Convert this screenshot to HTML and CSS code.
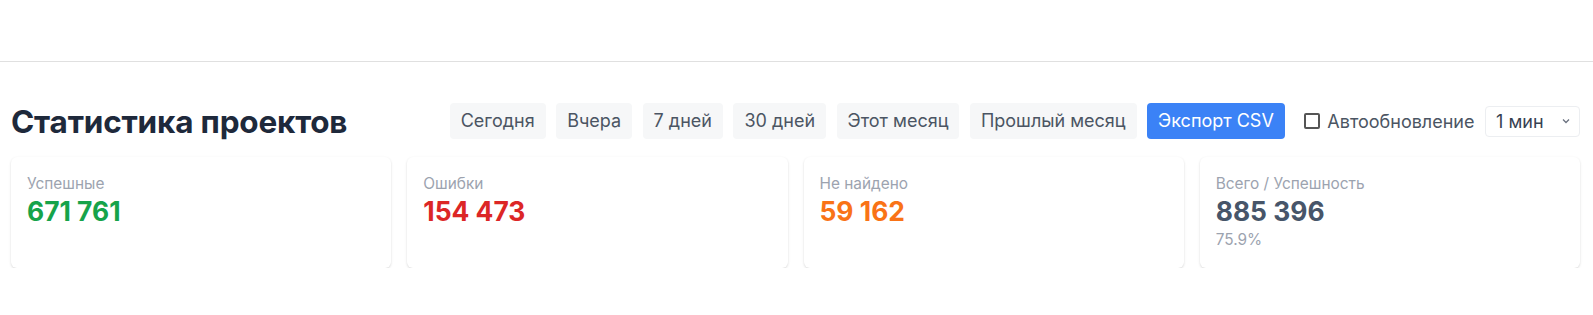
FILE: index.html
```html
<!DOCTYPE html>
<html lang="ru">
<head>
<meta charset="utf-8">
<title>Статистика проектов</title>
<link rel="stylesheet" href="styles.css">
</head>
<body>
<nav class="topbar"></nav>
<main class="page">
  <div class="header">
    <h1 class="title">Статистика проектов</h1>
    <div class="controls">
      <button class="btn">Сегодня</button>
      <button class="btn">Вчера</button>
      <button class="btn">7 дней</button>
      <button class="btn">30 дней</button>
      <button class="btn">Этот месяц</button>
      <button class="btn">Прошлый месяц</button>
      <button class="btn btn-primary">Экспорт CSV</button>
      <label class="auto"><span class="box"></span>Автообновление</label>
      <div class="select">1 мин
        <svg class="chev" width="10" height="10" viewBox="0 0 10 10"><path d="M2 3.5 L5 6.5 L8 3.5" fill="none" stroke="#6b7280" stroke-width="1.3"/></svg>
      </div>
    </div>
  </div>
  <div class="cards">
    <div class="card">
      <div class="label">Успешные</div>
      <div class="value green">671 761</div>
    </div>
    <div class="card">
      <div class="label">Ошибки</div>
      <div class="value red">154 473</div>
    </div>
    <div class="card">
      <div class="label">Не найдено</div>
      <div class="value orange">59 162</div>
    </div>
    <div class="card">
      <div class="label">Всего / Успешность</div>
      <div class="value slate">885 396</div>
      <div class="sub">75.9%</div>
    </div>
  </div>
</main>
</body>
</html>
```
FILE: styles.css
```css
* { box-sizing: border-box; }
body {
  margin: 0;
  background: #fff;
  font-family: Inter, "Noto Sans", sans-serif;
  color: #1f2937;
}
.topbar {
  height: 62px;
  border-bottom: 1px solid #e0e0e0;
}
.page {
  padding: 41px 13px 0 11px;
}
.header {
  display: flex;
  justify-content: space-between;
  align-items: center;
  height: 36px;
}
.title {
  margin: 0;
  font-size: 31.5px;
  font-weight: 700;
  color: #1e293b;
  letter-spacing: -0.2px;
}
.controls {
  display: flex;
  align-items: center;
  gap: 10.5px;
}
.btn {
  font-family: inherit;
  font-size: 18px;
  line-height: 36px;
  height: 36px;
  padding: 0 11px;
  border: none;
  border-radius: 4px;
  background: #f6f7f8;
  color: #4b5563;
}
.btn-primary {
  background: #3b82f6;
  color: #fff;
}
.auto {
  display: flex;
  align-items: center;
  gap: 7px;
  margin-left: 9px;
  font-size: 18px;
  color: #4b5563;
}
.box {
  width: 16px;
  height: 16px;
  border: 2px solid #555;
  border-radius: 2px;
}
.select {
  display: flex;
  align-items: center;
  justify-content: space-between;
  width: 95px;
  height: 31px;
  padding: 0 8px 0 10px;
  border: 1px solid #eceef1;
  border-radius: 4px;
  font-size: 18px;
  color: #374151;
}
.cards {
  display: grid;
  grid-template-columns: repeat(4, 1fr);
  gap: 16px;
  margin-top: 18px;
}
.card {
  height: 111px;
  background: #fff;
  border-radius: 6px;
  box-shadow: 0 1px 3px rgba(0, 0, 0, 0.1), 0 1px 2px rgba(0, 0, 0, 0.06);
  padding: 17px 16px;
}
.label {
  font-size: 15.4px;
  line-height: 19px;
  color: #9ca3af;
}
.value {
  font-size: 26.4px;
  line-height: 32px;
  font-weight: 700;
  margin-top: 2px;
}
.sub {
  font-size: 15.4px;
  line-height: 19px;
  color: #9ca3af;
  margin-top: 3px;
}
.green { color: #16a34a; }
.red { color: #dc2626; }
.orange { color: #f97316; }
.slate { color: #475569; }
```
